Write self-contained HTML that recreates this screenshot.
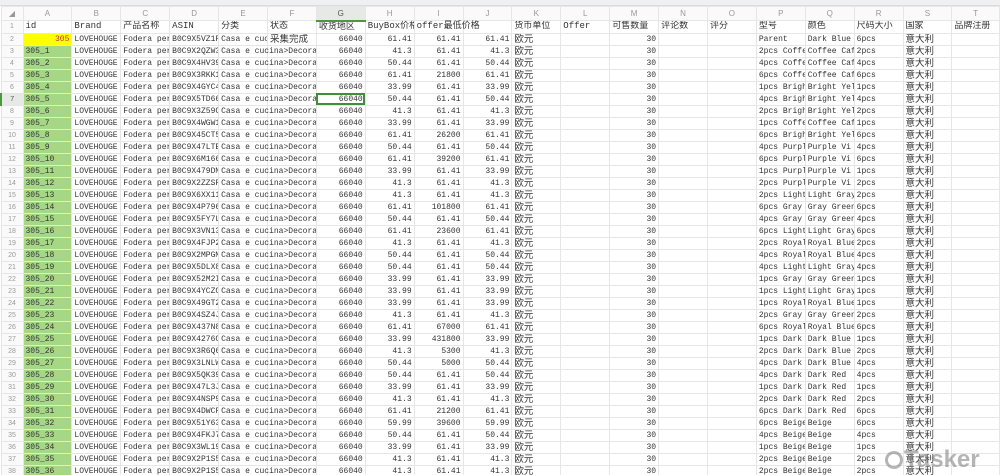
<!DOCTYPE html>
<html><head><meta charset="utf-8"><style>
html,body{margin:0;padding:0;background:#fff;width:1000px;height:475px;overflow:hidden}
.top{height:6px;background:#eef0f2;border-bottom:1px solid #dcdcdc;box-sizing:border-box}
table{border-collapse:collapse;table-layout:fixed;width:1000px;font-family:"Liberation Mono","Noto Sans CJK SC",monospace;font-size:8px;color:#333}
td,th{border:1px solid #e6e6e6;padding:0 2px;white-space:nowrap;overflow:hidden;height:12px;line-height:11px;box-sizing:border-box}
tr{height:12px}
th{font-weight:normal;color:#999;font-size:7px;text-align:center;background:#fafafa;font-family:"Liberation Sans",sans-serif}
tr.h{height:14px}
tr.h th{height:14px;font-size:8px}
tr.h th.sel{background:#e6e9e6;border-bottom:2px solid #4a9a3c;color:#555}
th.rs{background:#e6e9e6;border-left:2px solid #4a9a3c;color:#555}
.a{background:#a6d785}
.y{background:#ffff00;color:#c0392b;text-align:right}
.r{text-align:right}
.c{font-family:"Liberation Sans","Noto Sans CJK SC",sans-serif;font-size:9.5px}
.o{overflow:visible}
.o span{display:block;width:95px;overflow:hidden}
.hd td{font-family:"Liberation Mono","Noto Sans CJK SC",monospace;font-size:9px}
.g{outline:2px solid #3f8f3a;outline-offset:-2px}
.wm{position:absolute;left:885px;top:446px;font-family:"Liberation Sans",sans-serif;font-size:24px;font-weight:bold;color:rgba(120,120,120,.55);letter-spacing:0}
.wm i{display:inline-block;width:18px;height:18px;border:3px solid rgba(120,120,120,.55);border-radius:50%;box-sizing:border-box;vertical-align:-2px;margin-right:1px}
</style></head><body>
<div class="top"></div>
<table>
<colgroup><col style="width:22px"><col span="19" style="width:48.9px"><col></colgroup>
<tr class="h"><th>◢</th><th>A</th><th>B</th><th>C</th><th>D</th><th>E</th><th>F</th><th class="sel">G</th><th>H</th><th>I</th><th>J</th><th>K</th><th>L</th><th>M</th><th>N</th><th>O</th><th>P</th><th>Q</th><th>R</th><th>S</th><th>T</th></tr>
<tr class="hd"><th>1</th><td>id</td><td>Brand</td><td>产品名称</td><td>ASIN</td><td>分类</td><td>状态</td><td>收货地区</td><td>BuyBox价格</td><td class="o">offer最低价格</td><td></td><td>货币单位</td><td>Offer</td><td>可售数量</td><td>评论数</td><td>评分</td><td>型号</td><td>颜色</td><td>尺码大小</td><td>国家</td><td>品牌注册</td></tr>
<tr><th>2</th><td class="y">305</td><td>LOVEHOUGE</td><td>Fodera per</td><td>B0C9X5VZ1F</td><td>Casa e cuc</td><td class="c">采集完成</td><td class="r">66040</td><td class="r">61.41</td><td class="r">61.41</td><td class="r">61.41</td><td class="c">欧元</td><td></td><td class="r">30</td><td></td><td></td><td>Parent</td><td>Dark Blue</td><td>6pcs</td><td class="c">意大利</td><td></td></tr>
<tr><th>3</th><td class="a">305_1</td><td>LOVEHOUGE</td><td>Fodera per</td><td>B0C9X2QZW3</td><td class="o"><span>Casa e cucina>Decora</span></td><td></td><td class="r">66040</td><td class="r">41.3</td><td class="r">61.41</td><td class="r">41.3</td><td class="c">欧元</td><td></td><td class="r">30</td><td></td><td></td><td>2pcs Coffe</td><td>Coffee Caf</td><td>2pcs</td><td class="c">意大利</td><td></td></tr>
<tr><th>4</th><td class="a">305_2</td><td>LOVEHOUGE</td><td>Fodera per</td><td>B0C9X4HV39</td><td class="o"><span>Casa e cucina>Decora</span></td><td></td><td class="r">66040</td><td class="r">50.44</td><td class="r">61.41</td><td class="r">50.44</td><td class="c">欧元</td><td></td><td class="r">30</td><td></td><td></td><td>4pcs Coffe</td><td>Coffee Caf</td><td>4pcs</td><td class="c">意大利</td><td></td></tr>
<tr><th>5</th><td class="a">305_3</td><td>LOVEHOUGE</td><td>Fodera per</td><td>B0C9X3RKK1</td><td class="o"><span>Casa e cucina>Decora</span></td><td></td><td class="r">66040</td><td class="r">61.41</td><td class="r">21800</td><td class="r">61.41</td><td class="c">欧元</td><td></td><td class="r">30</td><td></td><td></td><td>6pcs Coffe</td><td>Coffee Caf</td><td>6pcs</td><td class="c">意大利</td><td></td></tr>
<tr><th>6</th><td class="a">305_4</td><td>LOVEHOUGE</td><td>Fodera per</td><td>B0C9X4GYC4</td><td class="o"><span>Casa e cucina>Decora</span></td><td></td><td class="r">66040</td><td class="r">33.99</td><td class="r">61.41</td><td class="r">33.99</td><td class="c">欧元</td><td></td><td class="r">30</td><td></td><td></td><td>1pcs Brigh</td><td>Bright Yel</td><td>1pcs</td><td class="c">意大利</td><td></td></tr>
<tr><th class="rs">7</th><td class="a">305_5</td><td>LOVEHOUGE</td><td>Fodera per</td><td>B0C9X5TD66</td><td class="o"><span>Casa e cucina>Decora</span></td><td></td><td class="r g">66040</td><td class="r">50.44</td><td class="r">61.41</td><td class="r">50.44</td><td class="c">欧元</td><td></td><td class="r">30</td><td></td><td></td><td>4pcs Brigh</td><td>Bright Yel</td><td>4pcs</td><td class="c">意大利</td><td></td></tr>
<tr><th>8</th><td class="a">305_6</td><td>LOVEHOUGE</td><td>Fodera per</td><td>B0C9X3Z59C</td><td class="o"><span>Casa e cucina>Decora</span></td><td></td><td class="r">66040</td><td class="r">41.3</td><td class="r">61.41</td><td class="r">41.3</td><td class="c">欧元</td><td></td><td class="r">30</td><td></td><td></td><td>2pcs Brigh</td><td>Bright Yel</td><td>2pcs</td><td class="c">意大利</td><td></td></tr>
<tr><th>9</th><td class="a">305_7</td><td>LOVEHOUGE</td><td>Fodera per</td><td>B0C9X4WGW1</td><td class="o"><span>Casa e cucina>Decora</span></td><td></td><td class="r">66040</td><td class="r">33.99</td><td class="r">61.41</td><td class="r">33.99</td><td class="c">欧元</td><td></td><td class="r">30</td><td></td><td></td><td>1pcs Coffe</td><td>Coffee Caf</td><td>1pcs</td><td class="c">意大利</td><td></td></tr>
<tr><th>10</th><td class="a">305_8</td><td>LOVEHOUGE</td><td>Fodera per</td><td>B0C9X45CT5</td><td class="o"><span>Casa e cucina>Decora</span></td><td></td><td class="r">66040</td><td class="r">61.41</td><td class="r">26200</td><td class="r">61.41</td><td class="c">欧元</td><td></td><td class="r">30</td><td></td><td></td><td>6pcs Brigh</td><td>Bright Yel</td><td>6pcs</td><td class="c">意大利</td><td></td></tr>
<tr><th>11</th><td class="a">305_9</td><td>LOVEHOUGE</td><td>Fodera per</td><td>B0C9X47LTE</td><td class="o"><span>Casa e cucina>Decora</span></td><td></td><td class="r">66040</td><td class="r">50.44</td><td class="r">61.41</td><td class="r">50.44</td><td class="c">欧元</td><td></td><td class="r">30</td><td></td><td></td><td>4pcs Purpl</td><td>Purple Vi</td><td>4pcs</td><td class="c">意大利</td><td></td></tr>
<tr><th>12</th><td class="a">305_10</td><td>LOVEHOUGE</td><td>Fodera per</td><td>B0C9X6M166</td><td class="o"><span>Casa e cucina>Decora</span></td><td></td><td class="r">66040</td><td class="r">61.41</td><td class="r">39200</td><td class="r">61.41</td><td class="c">欧元</td><td></td><td class="r">30</td><td></td><td></td><td>6pcs Purpl</td><td>Purple Vi</td><td>6pcs</td><td class="c">意大利</td><td></td></tr>
<tr><th>13</th><td class="a">305_11</td><td>LOVEHOUGE</td><td>Fodera per</td><td>B0C9X479DM</td><td class="o"><span>Casa e cucina>Decora</span></td><td></td><td class="r">66040</td><td class="r">33.99</td><td class="r">61.41</td><td class="r">33.99</td><td class="c">欧元</td><td></td><td class="r">30</td><td></td><td></td><td>1pcs Purpl</td><td>Purple Vi</td><td>1pcs</td><td class="c">意大利</td><td></td></tr>
<tr><th>14</th><td class="a">305_12</td><td>LOVEHOUGE</td><td>Fodera per</td><td>B0C9X2ZZSF</td><td class="o"><span>Casa e cucina>Decora</span></td><td></td><td class="r">66040</td><td class="r">41.3</td><td class="r">61.41</td><td class="r">41.3</td><td class="c">欧元</td><td></td><td class="r">30</td><td></td><td></td><td>2pcs Purpl</td><td>Purple Vi</td><td>2pcs</td><td class="c">意大利</td><td></td></tr>
<tr><th>15</th><td class="a">305_13</td><td>LOVEHOUGE</td><td>Fodera per</td><td>B0C9X6XX11</td><td class="o"><span>Casa e cucina>Decora</span></td><td></td><td class="r">66040</td><td class="r">41.3</td><td class="r">61.41</td><td class="r">41.3</td><td class="c">欧元</td><td></td><td class="r">30</td><td></td><td></td><td>2pcs Light</td><td>Light Gray</td><td>2pcs</td><td class="c">意大利</td><td></td></tr>
<tr><th>16</th><td class="a">305_14</td><td>LOVEHOUGE</td><td>Fodera per</td><td>B0C9X4P796</td><td class="o"><span>Casa e cucina>Decora</span></td><td></td><td class="r">66040</td><td class="r">61.41</td><td class="r">101800</td><td class="r">61.41</td><td class="c">欧元</td><td></td><td class="r">30</td><td></td><td></td><td>6pcs Gray</td><td>Gray Green</td><td>6pcs</td><td class="c">意大利</td><td></td></tr>
<tr><th>17</th><td class="a">305_15</td><td>LOVEHOUGE</td><td>Fodera per</td><td>B0C9X5FY7L</td><td class="o"><span>Casa e cucina>Decora</span></td><td></td><td class="r">66040</td><td class="r">50.44</td><td class="r">61.41</td><td class="r">50.44</td><td class="c">欧元</td><td></td><td class="r">30</td><td></td><td></td><td>4pcs Gray</td><td>Gray Green</td><td>4pcs</td><td class="c">意大利</td><td></td></tr>
<tr><th>18</th><td class="a">305_16</td><td>LOVEHOUGE</td><td>Fodera per</td><td>B0C9X3VN13</td><td class="o"><span>Casa e cucina>Decora</span></td><td></td><td class="r">66040</td><td class="r">61.41</td><td class="r">23600</td><td class="r">61.41</td><td class="c">欧元</td><td></td><td class="r">30</td><td></td><td></td><td>6pcs Light</td><td>Light Gray</td><td>6pcs</td><td class="c">意大利</td><td></td></tr>
<tr><th>19</th><td class="a">305_17</td><td>LOVEHOUGE</td><td>Fodera per</td><td>B0C9X4FJP2</td><td class="o"><span>Casa e cucina>Decora</span></td><td></td><td class="r">66040</td><td class="r">41.3</td><td class="r">61.41</td><td class="r">41.3</td><td class="c">欧元</td><td></td><td class="r">30</td><td></td><td></td><td>2pcs Royal</td><td>Royal Blue</td><td>2pcs</td><td class="c">意大利</td><td></td></tr>
<tr><th>20</th><td class="a">305_18</td><td>LOVEHOUGE</td><td>Fodera per</td><td>B0C9X2MPGM</td><td class="o"><span>Casa e cucina>Decora</span></td><td></td><td class="r">66040</td><td class="r">50.44</td><td class="r">61.41</td><td class="r">50.44</td><td class="c">欧元</td><td></td><td class="r">30</td><td></td><td></td><td>4pcs Royal</td><td>Royal Blue</td><td>4pcs</td><td class="c">意大利</td><td></td></tr>
<tr><th>21</th><td class="a">305_19</td><td>LOVEHOUGE</td><td>Fodera per</td><td>B0C9X5DLX8</td><td class="o"><span>Casa e cucina>Decora</span></td><td></td><td class="r">66040</td><td class="r">50.44</td><td class="r">61.41</td><td class="r">50.44</td><td class="c">欧元</td><td></td><td class="r">30</td><td></td><td></td><td>4pcs Light</td><td>Light Gray</td><td>4pcs</td><td class="c">意大利</td><td></td></tr>
<tr><th>22</th><td class="a">305_20</td><td>LOVEHOUGE</td><td>Fodera per</td><td>B0C9X52M2I</td><td class="o"><span>Casa e cucina>Decora</span></td><td></td><td class="r">66040</td><td class="r">33.99</td><td class="r">61.41</td><td class="r">33.99</td><td class="c">欧元</td><td></td><td class="r">30</td><td></td><td></td><td>1pcs Gray</td><td>Gray Green</td><td>1pcs</td><td class="c">意大利</td><td></td></tr>
<tr><th>23</th><td class="a">305_21</td><td>LOVEHOUGE</td><td>Fodera per</td><td>B0C9X4YCZC</td><td class="o"><span>Casa e cucina>Decora</span></td><td></td><td class="r">66040</td><td class="r">33.99</td><td class="r">61.41</td><td class="r">33.99</td><td class="c">欧元</td><td></td><td class="r">30</td><td></td><td></td><td>1pcs Light</td><td>Light Gray</td><td>1pcs</td><td class="c">意大利</td><td></td></tr>
<tr><th>24</th><td class="a">305_22</td><td>LOVEHOUGE</td><td>Fodera per</td><td>B0C9X49GT2</td><td class="o"><span>Casa e cucina>Decora</span></td><td></td><td class="r">66040</td><td class="r">33.99</td><td class="r">61.41</td><td class="r">33.99</td><td class="c">欧元</td><td></td><td class="r">30</td><td></td><td></td><td>1pcs Royal</td><td>Royal Blue</td><td>1pcs</td><td class="c">意大利</td><td></td></tr>
<tr><th>25</th><td class="a">305_23</td><td>LOVEHOUGE</td><td>Fodera per</td><td>B0C9X4SZ4J</td><td class="o"><span>Casa e cucina>Decora</span></td><td></td><td class="r">66040</td><td class="r">41.3</td><td class="r">61.41</td><td class="r">41.3</td><td class="c">欧元</td><td></td><td class="r">30</td><td></td><td></td><td>2pcs Gray</td><td>Gray Green</td><td>2pcs</td><td class="c">意大利</td><td></td></tr>
<tr><th>26</th><td class="a">305_24</td><td>LOVEHOUGE</td><td>Fodera per</td><td>B0C9X437N8</td><td class="o"><span>Casa e cucina>Decora</span></td><td></td><td class="r">66040</td><td class="r">61.41</td><td class="r">67000</td><td class="r">61.41</td><td class="c">欧元</td><td></td><td class="r">30</td><td></td><td></td><td>6pcs Royal</td><td>Royal Blue</td><td>6pcs</td><td class="c">意大利</td><td></td></tr>
<tr><th>27</th><td class="a">305_25</td><td>LOVEHOUGE</td><td>Fodera per</td><td>B0C9X4276C</td><td class="o"><span>Casa e cucina>Decora</span></td><td></td><td class="r">66040</td><td class="r">33.99</td><td class="r">431800</td><td class="r">33.99</td><td class="c">欧元</td><td></td><td class="r">30</td><td></td><td></td><td>1pcs Dark</td><td>Dark Blue</td><td>1pcs</td><td class="c">意大利</td><td></td></tr>
<tr><th>28</th><td class="a">305_26</td><td>LOVEHOUGE</td><td>Fodera per</td><td>B0C9X3R6Q6</td><td class="o"><span>Casa e cucina>Decora</span></td><td></td><td class="r">66040</td><td class="r">41.3</td><td class="r">5300</td><td class="r">41.3</td><td class="c">欧元</td><td></td><td class="r">30</td><td></td><td></td><td>2pcs Dark</td><td>Dark Blue</td><td>2pcs</td><td class="c">意大利</td><td></td></tr>
<tr><th>29</th><td class="a">305_27</td><td>LOVEHOUGE</td><td>Fodera per</td><td>B0C9X3LNLW</td><td class="o"><span>Casa e cucina>Decora</span></td><td></td><td class="r">66040</td><td class="r">50.44</td><td class="r">5000</td><td class="r">50.44</td><td class="c">欧元</td><td></td><td class="r">30</td><td></td><td></td><td>4pcs Dark</td><td>Dark Blue</td><td>4pcs</td><td class="c">意大利</td><td></td></tr>
<tr><th>30</th><td class="a">305_28</td><td>LOVEHOUGE</td><td>Fodera per</td><td>B0C9X5QK39</td><td class="o"><span>Casa e cucina>Decora</span></td><td></td><td class="r">66040</td><td class="r">50.44</td><td class="r">61.41</td><td class="r">50.44</td><td class="c">欧元</td><td></td><td class="r">30</td><td></td><td></td><td>4pcs Dark</td><td>Dark Red</td><td>4pcs</td><td class="c">意大利</td><td></td></tr>
<tr><th>31</th><td class="a">305_29</td><td>LOVEHOUGE</td><td>Fodera per</td><td>B0C9X47L3J</td><td class="o"><span>Casa e cucina>Decora</span></td><td></td><td class="r">66040</td><td class="r">33.99</td><td class="r">61.41</td><td class="r">33.99</td><td class="c">欧元</td><td></td><td class="r">30</td><td></td><td></td><td>1pcs Dark</td><td>Dark Red</td><td>1pcs</td><td class="c">意大利</td><td></td></tr>
<tr><th>32</th><td class="a">305_30</td><td>LOVEHOUGE</td><td>Fodera per</td><td>B0C9X4NSP9</td><td class="o"><span>Casa e cucina>Decora</span></td><td></td><td class="r">66040</td><td class="r">41.3</td><td class="r">61.41</td><td class="r">41.3</td><td class="c">欧元</td><td></td><td class="r">30</td><td></td><td></td><td>2pcs Dark</td><td>Dark Red</td><td>2pcs</td><td class="c">意大利</td><td></td></tr>
<tr><th>33</th><td class="a">305_31</td><td>LOVEHOUGE</td><td>Fodera per</td><td>B0C9X4DWCF</td><td class="o"><span>Casa e cucina>Decora</span></td><td></td><td class="r">66040</td><td class="r">61.41</td><td class="r">21200</td><td class="r">61.41</td><td class="c">欧元</td><td></td><td class="r">30</td><td></td><td></td><td>6pcs Dark</td><td>Dark Red</td><td>6pcs</td><td class="c">意大利</td><td></td></tr>
<tr><th>34</th><td class="a">305_32</td><td>LOVEHOUGE</td><td>Fodera per</td><td>B0C9X51Y63</td><td class="o"><span>Casa e cucina>Decora</span></td><td></td><td class="r">66040</td><td class="r">59.99</td><td class="r">39600</td><td class="r">59.99</td><td class="c">欧元</td><td></td><td class="r">30</td><td></td><td></td><td>6pcs Beige</td><td>Beige</td><td>6pcs</td><td class="c">意大利</td><td></td></tr>
<tr><th>35</th><td class="a">305_33</td><td>LOVEHOUGE</td><td>Fodera per</td><td>B0C9X4FKJ7</td><td class="o"><span>Casa e cucina>Decora</span></td><td></td><td class="r">66040</td><td class="r">50.44</td><td class="r">61.41</td><td class="r">50.44</td><td class="c">欧元</td><td></td><td class="r">30</td><td></td><td></td><td>4pcs Beige</td><td>Beige</td><td>4pcs</td><td class="c">意大利</td><td></td></tr>
<tr><th>36</th><td class="a">305_34</td><td>LOVEHOUGE</td><td>Fodera per</td><td>B0C9X3WL19</td><td class="o"><span>Casa e cucina>Decora</span></td><td></td><td class="r">66040</td><td class="r">33.99</td><td class="r">61.41</td><td class="r">33.99</td><td class="c">欧元</td><td></td><td class="r">30</td><td></td><td></td><td>1pcs Beige</td><td>Beige</td><td>1pcs</td><td class="c">意大利</td><td></td></tr>
<tr><th>37</th><td class="a">305_35</td><td>LOVEHOUGE</td><td>Fodera per</td><td>B0C9X2P1S5</td><td class="o"><span>Casa e cucina>Decora</span></td><td></td><td class="r">66040</td><td class="r">41.3</td><td class="r">61.41</td><td class="r">41.3</td><td class="c">欧元</td><td></td><td class="r">30</td><td></td><td></td><td>2pcs Beige</td><td>Beige</td><td>2pcs</td><td class="c">意大利</td><td></td></tr>
<tr><th>38</th><td class="a">305_36</td><td>LOVEHOUGE</td><td>Fodera per</td><td>B0C9X2P1S5</td><td class="o"><span>Casa e cucina>Decora</span></td><td></td><td class="r">66040</td><td class="r">41.3</td><td class="r">61.41</td><td class="r">41.3</td><td class="c">欧元</td><td></td><td class="r">30</td><td></td><td></td><td>2pcs Beige</td><td>Beige</td><td>2pcs</td><td class="c">意大利</td><td></td></tr>
</table>
<div class="wm"><i></i>Tasker</div>
</body></html>
